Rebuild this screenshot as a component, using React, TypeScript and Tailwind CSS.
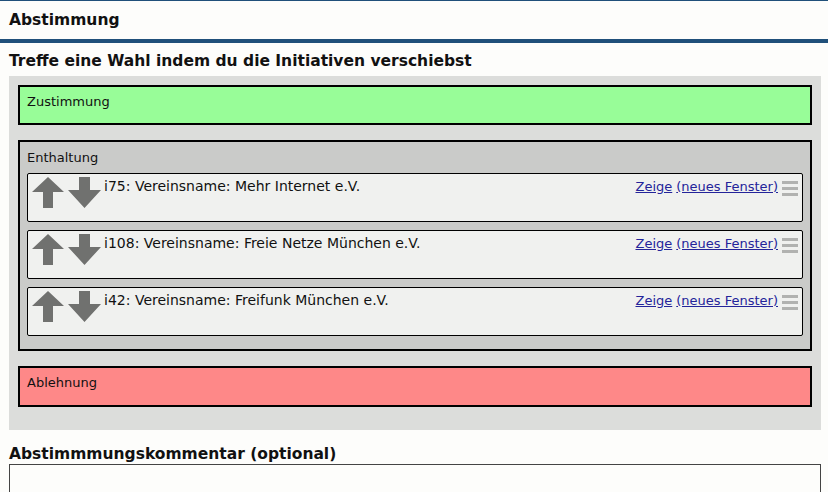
import React from 'react';

const items = [
  { id: 'i75', name: 'Vereinsname: Mehr Internet e.V.' },
  { id: 'i108', name: 'Vereinsname: Freie Netze München e.V.' },
  { id: 'i42', name: 'Vereinsname: Freifunk München e.V.' },
];

function Arrows() {
  return (
    <div className="flex gap-[4px] shrink-0">
      {/* hoch */}
      <svg width="32" height="31" viewBox="0 0 32 31">
        <polygon points="16,0 32,15 21,15 21,31 11,31 11,15 0,15" fill="#70716f" />
      </svg>
      {/* runter */}
      <svg width="33" height="31" viewBox="0 0 33 31">
        <polygon points="11,0 22,0 22,13 33,13 16.5,31 0,13 11,13" fill="#70716f" />
      </svg>
    </div>
  );
}

function Handle() {
  return (
    <div className="flex flex-col gap-[3px] w-[16px] mt-[2px] shrink-0">
      <div className="h-[3px] bg-[#b1b2b0]" />
      <div className="h-[3px] bg-[#b1b2b0]" />
      <div className="h-[3px] bg-[#b1b2b0]" />
    </div>
  );
}

function Initiative({ id, name }: { id: string; name: string }) {
  return (
    <div className="h-[49px] border border-black rounded-[2px] bg-[#f0f1ef] flex items-start pt-[3px] pl-[4px] pr-[4px]">
      <Arrows />
      <div className="ml-[3px] flex-1 text-[14px] leading-[16px] pt-[1px] text-[#111]">
        {id}: {name}
      </div>
      <div className="flex items-start gap-[4px] pt-[2px]">
        <span className="text-[13px] leading-[15px] text-[#24249a] underline">Zeige</span>
        <span className="text-[13px] leading-[15px] text-[#24249a] underline">(neues Fenster)</span>
        <Handle />
      </div>
    </div>
  );
}

export default function App() {
  return (
    <div
      className="min-h-screen bg-[#fdfdfb] text-[#111] border-t border-[#20507a]"
      style={{ fontFamily: '"DejaVu Sans", Verdana, sans-serif' }}
    >
      {/* Kopfzeile */}
      <div className="h-[42px] flex items-center px-[9px] pt-[1px] border-b-4 border-[#20507a]">
        <h1 className="text-[15.5px] font-bold leading-[19px]">Abstimmung</h1>
      </div>

      <div className="px-[9px] pr-[7px]">
        <h2 className="text-[15.5px] font-bold leading-[19px] mt-[9px] mb-[5px]">
          Treffe eine Wahl indem du die Initiativen verschiebst
        </h2>

        <div className="bg-[#dcdddb] pt-[9px] pb-[23px] px-[9px] flex flex-col gap-[15px]">
          <div className="h-[40px] border-2 border-black bg-[#98fd98] px-[7px] pt-[7px] text-[13px] leading-[15px]">
            Zustimmung
          </div>

          <div className="border-2 border-black bg-[#cacbc9] px-[7px] pt-[8px] pb-[13px]">
            <div className="text-[13px] leading-[15px] mb-[8px]">Enthaltung</div>
            <div className="flex flex-col gap-2">
              {items.map(item => (
                <Initiative key={item.id} id={item.id} name={item.name} />
              ))}
            </div>
          </div>

          <div className="h-[41px] border-2 border-black bg-[#fe8888] px-[7px] pt-[7px] text-[13px] leading-[15px]">
            Ablehnung
          </div>
        </div>

        <h2 className="text-[15.5px] font-bold leading-[19px] mt-[15px]">
          Abstimmmungskommentar (optional)
        </h2>
        <textarea className="block w-full h-[80px] border border-[#444] bg-[#fdfdfb] resize-none" />
      </div>
    </div>
  );
}
